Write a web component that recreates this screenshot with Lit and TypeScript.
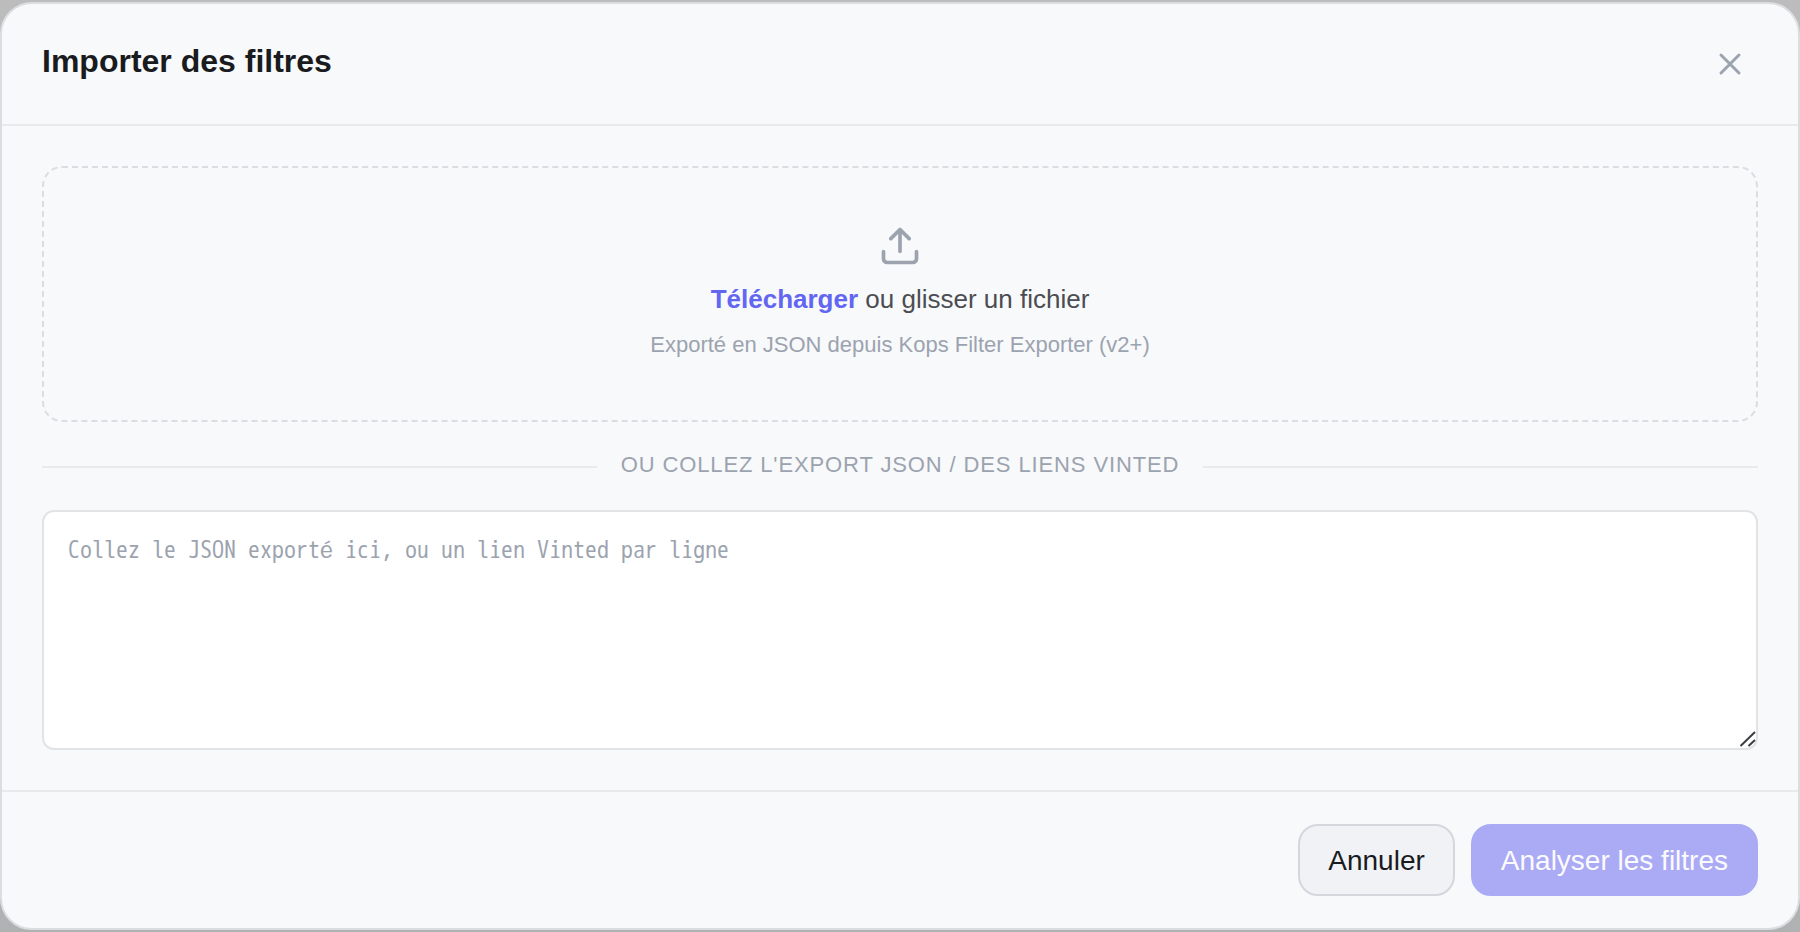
import { LitElement, html, css } from "lit";
import { customElement } from "lit/decorators.js";

@customElement("app-root")
export class AppRoot extends LitElement {
  static styles = css`
    :host {
      display: block;
      box-sizing: border-box;
      min-height: 100vh;
      padding: 2px 0;
      background: linear-gradient(#bcbcbd, #b0b1b3);
      font-family: "Liberation Sans", Arial, sans-serif;
      color: #1a1b1e;
    }
    * {
      box-sizing: border-box;
    }
    .dialog {
      display: flex;
      flex-direction: column;
      border: 2px solid #dcdde1;
      border-radius: 32px;
      background: #f8f9fb;
    }
    .header {
      display: flex;
      align-items: flex-start;
      justify-content: space-between;
      padding: 32px 40px;
      border-bottom: 2px solid #e9eaec;
    }
    .title {
      margin: 0;
      font-size: 32px;
      line-height: 50px;
      font-weight: 700;
    }
    .close {
      display: grid;
      place-items: center;
      width: 56px;
      height: 56px;
      padding: 0;
      border: 0;
      border-radius: 12px;
      background: none;
      color: #9ca3af;
    }
    .icon {
      display: block;
      fill: none;
      stroke: currentColor;
      stroke-width: 2;
      stroke-linecap: round;
      stroke-linejoin: round;
    }
    .body {
      display: flex;
      flex-direction: column;
      padding: 40px;
    }
    .drop {
      display: flex;
      flex-direction: column;
      align-items: center;
      padding: 56px 40px;
      border: 2px dashed #dcdde0;
      border-radius: 20px;
      color: #9ca3af;
      text-align: center;
      cursor: pointer;
    }
    .file {
      position: absolute;
      width: 1px;
      height: 1px;
      opacity: 0;
    }
    .prompt {
      margin-top: 12px;
      font-size: 26px;
      line-height: 38px;
      color: #4b4d52;
    }
    .prompt strong {
      color: #6366f1;
    }
    .hint {
      margin-top: 8px;
      font-size: 22px;
      line-height: 38px;
    }
    .divider {
      display: flex;
      align-items: center;
      gap: 24px;
      margin: 24px 0 22px;
      font-size: 22px;
      line-height: 38px;
      letter-spacing: 0.04em;
      text-transform: uppercase;
      color: #9ca3af;
    }
    .divider::before,
    .divider::after {
      content: "";
      flex: 1;
      height: 2px;
      background: #e9eaec;
    }
    .divider-text {
      padding-bottom: 4px;
    }
    .paste {
      position: relative;
      display: grid;
    }
    .input {
      display: block;
      width: 100%;
      height: 240px;
      margin: 0;
      padding: 20px 24px;
      border: 2px solid #e2e3e5;
      border-radius: 12px;
      background: #fff;
      color: #1a1b1e;
      font-family: "WenQuanYi Zen Hei Mono", "Noto Sans Mono CJK SC", "Noto Sans CJK SC", monospace;
      font-size: 24px;
      line-height: 36px;
      resize: vertical;
      outline: none;
    }
    .input::placeholder {
      color: #9ca3af;
      opacity: 1;
    }
    .input::-webkit-resizer {
      background: transparent;
    }
    .grip {
      position: absolute;
      right: 2px;
      bottom: 2px;
      stroke: #3c3d40;
      fill: none;
      pointer-events: none;
    }
    .footer {
      display: flex;
      justify-content: flex-end;
      gap: 16px;
      padding: 32px 40px;
      border-top: 2px solid #e9eaec;
    }
    .btn {
      height: 72px;
      padding: 2px 28px 0;
      border: 2px solid #d5d6de;
      border-radius: 20px;
      background: #f1f2f6;
      color: #1a1b1e;
      font-family: inherit;
      font-size: 28px;
      line-height: 40px;
    }
    .btn-primary {
      border-color: #ababf5;
      background: #ababf5;
      color: #fbfbfe;
    }
  `;

  render() {
    return html`
      <section class="dialog" role="dialog" aria-labelledby="title">
        <header class="header">
          <h2 class="title" id="title">Importer des filtres</h2>
          <button class="close" type="button" aria-label="Fermer">
            <svg class="icon" width="36" height="36" viewBox="0 0 24 24">
              <path d="M18 6 6 18M6 6l12 12" />
            </svg>
          </button>
        </header>
        <div class="body">
          <label class="drop" for="file">
            <input class="file" id="file" type="file" accept=".json" />
            <svg class="icon" width="44" height="44" viewBox="0 0 24 24">
              <path d="M21 15v4a2 2 0 0 1-2 2H5a2 2 0 0 1-2-2v-4M17 8l-5-5-5 5M12 3v12" />
            </svg>
            <span class="prompt"><strong>Télécharger</strong> ou glisser un fichier</span>
            <span class="hint">Exporté en JSON depuis Kops Filter Exporter (v2+)</span>
          </label>
          <label class="divider" for="paste">
            <span class="divider-text">Ou collez l'export JSON / des liens Vinted</span>
          </label>
          <div class="paste">
            <textarea
              class="input"
              id="paste"
              spellcheck="false"
              placeholder="Collez le JSON exporté ici, ou un lien Vinted par ligne"
            ></textarea>
            <svg class="grip" width="18" height="20" viewBox="0 0 18 20">
              <path d="M2.5 18 17 4M10.5 18l6.500-6" stroke-width="2" />
            </svg>
          </div>
        </div>
        <footer class="footer">
          <button class="btn" type="button">Annuler</button>
          <button class="btn btn-primary" type="button" disabled>Analyser les filtres</button>
        </footer>
      </section>
    `;
  }
}
